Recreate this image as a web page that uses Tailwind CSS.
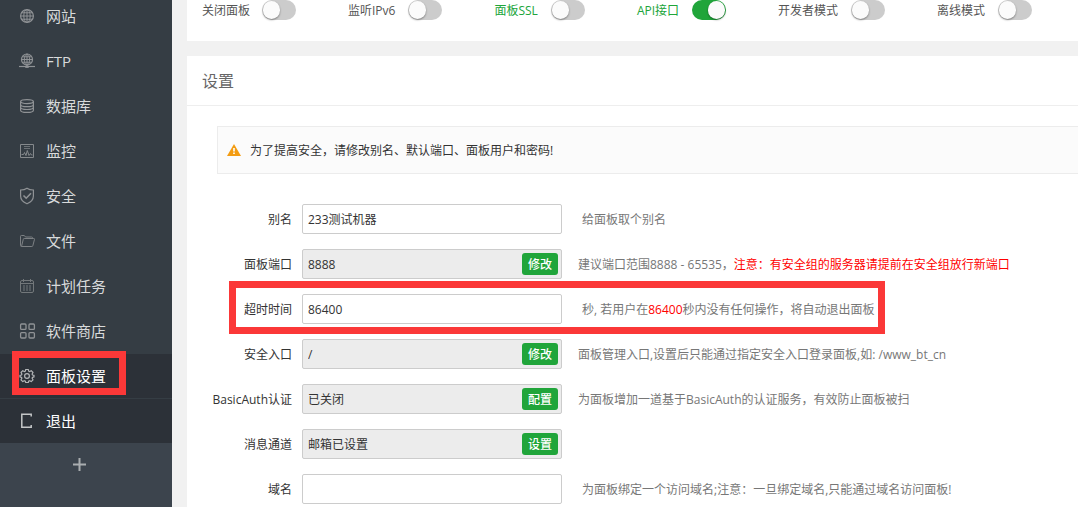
<!DOCTYPE html>
<html lang="zh-CN">
<head>
  <meta charset="utf-8">
  <meta name="viewport" content="width=device-width, initial-scale=1">
  <title>面板设置</title>
  <script src="https://cdn.jsdelivr.net/npm/@tailwindcss/browser@4"></script>
</head>
<body class="flex h-screen overflow-hidden bg-[#f1f1f1] font-['Open_Sans','Noto_Sans_CJK_SC',sans-serif] text-xs leading-[17px] text-[#333]">

  <!-- sidebar -->
  <aside class="w-[172px] shrink-0 overflow-hidden bg-[#3c444d]">
    <nav class="-mt-1.5 bg-[#353d44] text-[15px] leading-6 text-[#d8dadb]">
      <a href="#" class="flex h-[45px] items-center gap-3 border-b border-transparent pl-5">
        <svg class="size-3.5 text-[#8f9295]" viewBox="0 0 14 14" fill="none" stroke="currentColor">
          <circle cx="7" cy="7" r="6.4" stroke-width="1.2"/><ellipse cx="7" cy="7" rx="3.2" ry="6.4"/><path d="M7 .6v12.8M.6 7h12.8M1.6 3.8h10.8M1.6 10.2h10.8"/>
        </svg>
        网站
      </a>
      <a href="#" class="flex h-[45px] items-center gap-3 border-b border-transparent pl-5">
        <svg class="size-3.5 overflow-visible text-[#8f9295]" viewBox="0 0 14 14" fill="none" stroke="currentColor">
          <circle cx="7" cy="5.5" r="5.5" stroke-width="1.2"/><ellipse cx="7" cy="5.5" rx="2.7" ry="5.4"/><path d="M7 .2v12M1.7 5.5h10.6M2.6 2.8h8.8M2.6 8.2h8.8"/><path d="M-1 12.5h16" stroke-width="1.2"/><path d="M5.5 12h3v1.4h-3z"/>
        </svg>
        FTP
      </a>
      <a href="#" class="flex h-[45px] items-center gap-3 border-b border-transparent pl-5">
        <svg class="size-3.5 text-[#8f9295]" viewBox="0 0 14 14" fill="none" stroke="currentColor" stroke-width="1.2">
          <ellipse cx="7" cy="2.6" rx="6.4" ry="2"/><path d="M.6 2.6v8.6c0 1.2 2.8 2.200 6.400 2.200s6.400-1 6.400-2.200V2.600M.6 5.400c0 1.200 2.800 2.200 6.400 2.200s6.400-1 6.400-2.200M.6 8.300c0 1.200 2.800 2.200 6.400 2.200s6.400-1 6.400-2.200"/>
        </svg>
        数据库
      </a>
      <a href="#" class="flex h-[45px] items-center gap-3 border-b border-transparent pl-5">
        <svg class="size-3.5 text-[#85898c]" viewBox="0 0 14 14" fill="none" stroke="currentColor">
          <path d="M.5.5h13v13H.5z"/><path d="M4 2.500h6M4 4.500h6" opacity=".7"/><path d="M1.500 10.500h2l1-2 1.500 3 1.300-5 1.700 5 1.500-2 1 1.500h1"/>
        </svg>
        监控
      </a>
      <a href="#" class="flex h-[45px] items-center gap-3 border-b border-transparent pl-5">
        <svg class="size-3.5 overflow-visible text-[#8f9295]" viewBox="0 0 14 14" fill="none" stroke="currentColor" stroke-width="1.200">
          <path d="M7-.8C5.200.5 3 1 .6 1v6c0 3.800 3 6.400 6.400 7.800 3.400-1.400 6.400-4 6.400-7.800V1C11 1 8.800.5 7-.8z"/><path d="M3.500 6.500l2.700 2.700 4.800-5" stroke-width="1.600"/>
        </svg>
        安全
      </a>
      <a href="#" class="flex h-[45px] items-center gap-3 border-b border-transparent pl-5">
        <svg class="size-3.5 overflow-visible text-[#7d8184]" viewBox="0 0 14 14" fill="none" stroke="currentColor">
          <path d="M1.500 12.500C.8 12.500.5 12.200.5 11.500V2.300c0-.5.300-.8.800-.8h3l1.200 1.500h6.200c.5 0 .8.300.8.800v.7M1.500 12.500l1.800-7.300c.1-.4.400-.7.900-.7h9.600c.5 0 .8.300.7.800l-1.700 6.500c-.1.400-.4.700-.9.700z"/>
        </svg>
        文件
      </a>
      <a href="#" class="flex h-[45px] items-center gap-3 border-b border-transparent pl-5">
        <svg class="size-3.5 text-[#73787b]" viewBox="0 0 14 14" fill="none" stroke="currentColor">
          <rect x=".5" y="1.500" width="13" height="12" rx="1.500"/><path d="M.5 4.500h13M3.500 0v3M10.500 0v3"/><path d="M3 7h8M3 9h8M3 11h8" stroke-dasharray="2 1"/>
        </svg>
        计划任务
      </a>
      <a href="#" class="flex h-[45px] items-center gap-3 border-b border-transparent pl-5">
        <svg class="size-3.5 overflow-visible text-[#8f9295]" viewBox="0 0 14 14" fill="none" stroke="currentColor" stroke-width="1.300">
          <rect x=".6" y="0" width="5.400" height="5.400" rx="1"/><rect x="9" y="0" width="5.400" height="5.400" rx="1"/><rect x=".6" y="8.600" width="5.400" height="5.400" rx="1"/><rect x="9" y="8.600" width="5.400" height="5.400" rx="1"/>
        </svg>
        软件商店
      </a>
      <a href="#" class="relative flex h-[45px] items-center gap-3 border-b border-[#353d44] bg-[#2c3138] pl-5 text-white">
        <svg class="size-3.5 overflow-visible text-[#b4b6b8]" viewBox="0 0 14 14" fill="none" stroke="currentColor" stroke-width="1.200" stroke-linejoin="round">
          <path d="M5.700.5h2.600l.4 1.700 1 .4 1.500-.9 1.800 1.800-.9 1.500.4 1 1.500.3v1.600l-1.500.4-.4 1 .9 1.500-1.800 1.800-1.500-.9-1 .4-.4 1.400H5.700l-.4-1.400-1-.4-1.500.9L1 10.800l.9-1.500-.4-1L0 7.900V6.300L1.500 6l.4-1L1 3.500l1.800-1.800 1.500.9 1-.4z"/><circle cx="7" cy="7" r="2.400"/>
        </svg>
        面板设置
        <span class="absolute -top-[3px] left-3 h-11 w-[114px] border-[7px] border-[#fb3838]"></span>
      </a>
      <a href="#" class="flex h-11 items-center gap-3 bg-[#2c3138] pl-5 text-white">
        <svg class="size-3.5 overflow-visible text-[#c4c6c7]" viewBox="0 0 14 14" fill="none" stroke="currentColor" stroke-width="1.500">
          <path d="M11.200 2.500V.2H1.800v13.100h9.400V11"/>
        </svg>
        退出
      </a>
    </nav>
    <button type="button" aria-label="添加" class="flex h-[42px] w-full items-center pl-[73px] text-[#a9adb0]">
      <svg class="size-[13px]" viewBox="0 0 13 13" fill="none" stroke="currentColor" stroke-width="2"><path d="M6.500 0v13M0 6.500h13"/></svg>
    </button>
  </aside>

  <main class="ml-[15px] min-w-0 flex-1 overflow-hidden">
    <!-- switches -->
    <section class="flex gap-[52px] bg-white pb-[21px] pl-[15px] whitespace-nowrap text-[#555]">
      <label class="flex h-5 items-center gap-3">关闭面板
        <input type="checkbox" role="switch" class="h-5 w-[34px] appearance-none rounded-full bg-[#ccc] p-px before:block before:h-[18px] before:w-[17px] before:rounded-full before:bg-[#fbfbfb] before:shadow-[0_1px_2px_#0006] checked:bg-[#20a53a] checked:before:ml-[15px]">
      </label>
      <label class="flex h-5 items-center gap-[13px]">监听IPv6
        <input type="checkbox" role="switch" class="h-5 w-[34px] appearance-none rounded-full bg-[#ccc] p-px before:block before:h-[18px] before:w-[17px] before:rounded-full before:bg-[#fbfbfb] before:shadow-[0_1px_2px_#0006] checked:bg-[#20a53a] checked:before:ml-[15px]">
      </label>
      <label class="flex h-5 items-center gap-[13px]"><span class="text-[#20a53a]">面板SSL</span>
        <input type="checkbox" role="switch" class="h-5 w-[34px] appearance-none rounded-full bg-[#ccc] p-px before:block before:h-[18px] before:w-[17px] before:rounded-full before:bg-[#fbfbfb] before:shadow-[0_1px_2px_#0006] checked:bg-[#20a53a] checked:before:ml-[15px]">
      </label>
      <label class="flex h-5 items-center gap-[13px]"><span class="text-[#20a53a]">API接口</span>
        <input type="checkbox" role="switch" checked class="h-5 w-[34px] appearance-none rounded-full bg-[#ccc] p-px before:block before:h-[18px] before:w-[17px] before:rounded-full before:bg-[#fbfbfb] before:shadow-[0_1px_2px_#0006] checked:bg-[#20a53a] checked:before:ml-[15px]">
      </label>
      <label class="flex h-5 items-center gap-[13px]">开发者模式
        <input type="checkbox" role="switch" class="h-5 w-[34px] appearance-none rounded-full bg-[#ccc] p-px before:block before:h-[18px] before:w-[17px] before:rounded-full before:bg-[#fbfbfb] before:shadow-[0_1px_2px_#0006] checked:bg-[#20a53a] checked:before:ml-[15px]">
      </label>
      <label class="flex h-5 items-center gap-[13px]">离线模式
        <input type="checkbox" role="switch" class="h-5 w-[34px] appearance-none rounded-full bg-[#ccc] p-px before:block before:h-[18px] before:w-[17px] before:rounded-full before:bg-[#fbfbfb] before:shadow-[0_1px_2px_#0006] checked:bg-[#20a53a] checked:before:ml-[15px]">
      </label>
    </section>

    <!-- settings -->
    <section class="mt-[15px] bg-white pb-5">
      <h1 class="flex h-[50px] items-center border-b border-[#eee] pl-[15px] text-base text-[#666]">设置</h1>

      <div class="mt-5 ml-[30px] flex h-12 items-center gap-[9px] border border-r-0 border-[#ececec] bg-[#fbfbfb] pl-[9px]">
        <svg class="h-3 w-3.5" viewBox="0 0 14 12"><path d="M7 0l7 12H0z" fill="#f39c12"/><path d="M6.200 4h1.600v3.500H6.200zM6.200 8.500h1.600V10H6.200z" fill="#fff"/></svg>
        为了提高安全，请修改别名、默认端口、面板用户和密码!
      </div>

      <form class="mt-[30px] flex flex-col gap-[15px] whitespace-nowrap">
        <div class="flex h-[30px] items-center">
          <label for="alias" class="w-[105px] text-right">别名</label>
          <input id="alias" type="text" value="233测试机器" class="ml-2.5 h-[30px] w-[260px] rounded-xs border border-[#ccc] px-[5px]">
          <span class="ml-5 text-[#777]">给面板取个别名</span>
        </div>
        <div class="flex h-[30px] items-center">
          <label for="port" class="w-[105px] text-right">面板端口</label>
          <div class="ml-2.5 flex h-[30px] w-[260px] items-center rounded-xs border border-[#ccc] bg-[#ececec] pr-[3px] pl-[5px]">
            <input id="port" type="text" value="8888" readonly class="min-w-0 flex-1">
            <button type="button" class="h-[22px] w-9 rounded-[3px] bg-[#20a53a] font-medium text-white">修改</button>
          </div>
          <span class="ml-4 text-[#777]">建议端口范围8888 - 65535，<span class="text-[#f00]">注意：有安全组的服务器请提前在安全组放行新端口</span></span>
        </div>
        <div class="relative flex h-[30px] items-center">
          <label for="timeout" class="w-[105px] text-right">超时时间</label>
          <input id="timeout" type="text" value="86400" class="ml-2.5 h-[30px] w-[260px] rounded-xs border border-[#ccc] px-[5px]">
          <span class="ml-5 text-[#777]">秒, 若用户在<span class="text-[#f00]">86400</span>秒内没有任何操作，将自动退出面板</span>
          <span class="pointer-events-none absolute -top-[13px] left-[42px] h-[53px] w-[656px] border-[7px] border-[#fb3838]"></span>
        </div>
        <div class="flex h-[30px] items-center">
          <label for="entrance" class="w-[105px] text-right">安全入口</label>
          <div class="ml-2.5 flex h-[30px] w-[260px] items-center rounded-xs border border-[#ccc] bg-[#ececec] pr-[3px] pl-[5px]">
            <input id="entrance" type="text" value="/" readonly class="min-w-0 flex-1">
            <button type="button" class="h-[22px] w-9 rounded-[3px] bg-[#20a53a] font-medium text-white">修改</button>
          </div>
          <span class="ml-4 text-[#777]">面板管理入口,设置后只能通过指定安全入口登录面板,如: /www_bt_cn</span>
        </div>
        <div class="flex h-[30px] items-center">
          <label for="basicauth" class="w-[105px] text-right">BasicAuth认证</label>
          <div class="ml-2.5 flex h-[30px] w-[260px] items-center rounded-xs border border-[#ccc] bg-[#ececec] pr-[3px] pl-[5px]">
            <input id="basicauth" type="text" value="已关闭" readonly class="min-w-0 flex-1">
            <button type="button" class="h-[22px] w-9 rounded-[3px] bg-[#20a53a] font-medium text-white">配置</button>
          </div>
          <span class="ml-4 text-[#777]">为面板增加一道基于BasicAuth的认证服务，有效防止面板被扫</span>
        </div>
        <div class="flex h-[30px] items-center">
          <label for="channel" class="w-[105px] text-right">消息通道</label>
          <div class="ml-2.5 flex h-[30px] w-[260px] items-center rounded-xs border border-[#ccc] bg-[#ececec] pr-[3px] pl-[5px]">
            <input id="channel" type="text" value="邮箱已设置" readonly class="min-w-0 flex-1">
            <button type="button" class="h-[22px] w-9 rounded-[3px] bg-[#20a53a] font-medium text-white">设置</button>
          </div>
        </div>
        <div class="flex h-[30px] items-center">
          <label for="domain" class="w-[105px] text-right">域名</label>
          <input id="domain" type="text" class="ml-2.5 h-[30px] w-[260px] rounded-xs border border-[#ccc] px-[5px]">
          <span class="ml-5 text-[#777]">为面板绑定一个访问域名;注意：一旦绑定域名,只能通过域名访问面板!</span>
        </div>
      </form>
    </section>
  </main>
</body>
</html>
